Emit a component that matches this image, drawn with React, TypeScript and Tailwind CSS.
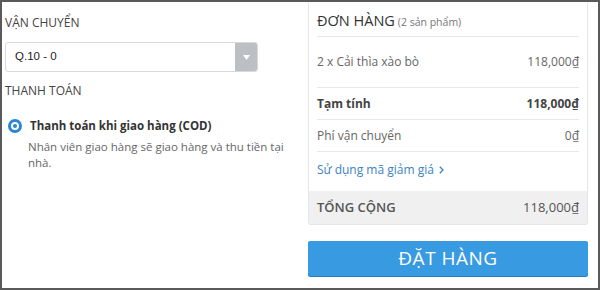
import React from 'react';

const sans = { fontFamily: '"Open Sans", "Noto Sans", sans-serif' };

const App: React.FC = () => {
  return (
    <div className="w-[600px] h-[290px] border-2 border-[#5a5a5a] bg-white flex text-[#444]" style={sans}>
      {/* Left: shipping + payment */}
      <div className="w-[300px] pl-[3px]">
        <div className="h-[40px] pt-[12px] text-[12px] leading-[18px] uppercase text-[#444]">Vận chuyển</div>
        <div className="flex items-stretch w-[253px] h-[30px] border border-[#d9d9d9] rounded-[3px] overflow-hidden">
          <div
            className="flex-1 flex items-center pl-[9px] text-[11.5px] text-[#222]"
            style={{ fontFamily: '"Liberation Sans", Arial, sans-serif' }}
          >
            Q.10 - 0
          </div>
          <div className="w-[22px] bg-[#bcbfc4] flex items-center justify-center">
            <svg width="7" height="5" viewBox="0 0 7 5">
              <path d="M0 0 H7 L3.5 5 Z" fill="#fff" />
            </svg>
          </div>
        </div>
        <div className="mt-[10px] text-[12px] leading-[18px] uppercase text-[#444]">Thanh toán</div>
        <div className="mt-[18px] flex items-center pl-[3px]">
          <div className="w-[14px] h-[14px] rounded-full border-[3px] border-[#2a86d6] flex items-center justify-center">
            <div className="w-[4px] h-[4px] rounded-full bg-[#2a86d6]" />
          </div>
          <div className="ml-[8px] text-[11.5px] font-bold text-[#333] leading-[16px]">Thanh toán khi giao hàng (COD)</div>
        </div>
        <div className="mt-[5px] pl-[23px] pr-[6px] text-[11.5px] leading-[16px] text-[#666]">
          Nhân viên giao hàng sẽ giao hàng và thu tiền tại nhà.
        </div>
      </div>

      {/* Right: order summary */}
      <div className="w-[280px] ml-[6px]">
        <div className="border border-t-0 border-[#e6e6e6] rounded-b-[3px]">
          <div className="mx-[8px] h-[35px] flex items-baseline pt-[8px] border-b border-[#e8e8e8]">
            <span className="text-[14.5px] uppercase text-[#333]">Đơn hàng</span>
            <span className="ml-[3px] text-[10.5px] text-[#777]">(2 sản phẩm)</span>
          </div>
          <div className="mx-[8px] h-[51px] flex items-center justify-between border-b border-[#e8e8e8] text-[12px] text-[#666]">
            <span>2 x Cải thìa xào bò</span>
            <span>118,000₫</span>
          </div>
          <div className="mx-[8px] h-[32px] flex items-center justify-between border-b border-[#e8e8e8] text-[12px] font-bold text-[#444]">
            <span>Tạm tính</span>
            <span>118,000₫</span>
          </div>
          <div className="mx-[8px] h-[32px] flex items-center justify-between border-b border-[#e8e8e8] text-[12px] text-[#666]">
            <span>Phí vận chuyển</span>
            <span>0₫</span>
          </div>
          <div className="mx-[8px] h-[39px] pt-[9px] text-[12px] text-[#3b82c4] flex items-start">
            <span>Sử dụng mã giảm giá</span>
            <svg className="ml-[5px] mt-[5px]" width="5" height="8" viewBox="0 0 5 8">
              <path d="M0.8 0.8 L4 4 L0.8 7.2" stroke="#3b82c4" strokeWidth="1.3" fill="none" />
            </svg>
          </div>
          <div className="h-[33px] bg-[#f0f0f0] px-[8px] flex items-center justify-between rounded-b-[3px]">
            <span className="text-[13px] font-semibold uppercase text-[#555]">Tổng cộng</span>
            <span className="text-[13px] text-[#555]">118,000₫</span>
          </div>
        </div>
        <button className="mt-[16px] w-[280px] h-[35px] bg-[#389ae0] rounded-[2px] shadow-[0_1px_0_#2b7fbd] text-white text-[19px] tracking-[0.5px] uppercase">
          Đặt hàng
        </button>
      </div>
    </div>
  );
};

export default App;
